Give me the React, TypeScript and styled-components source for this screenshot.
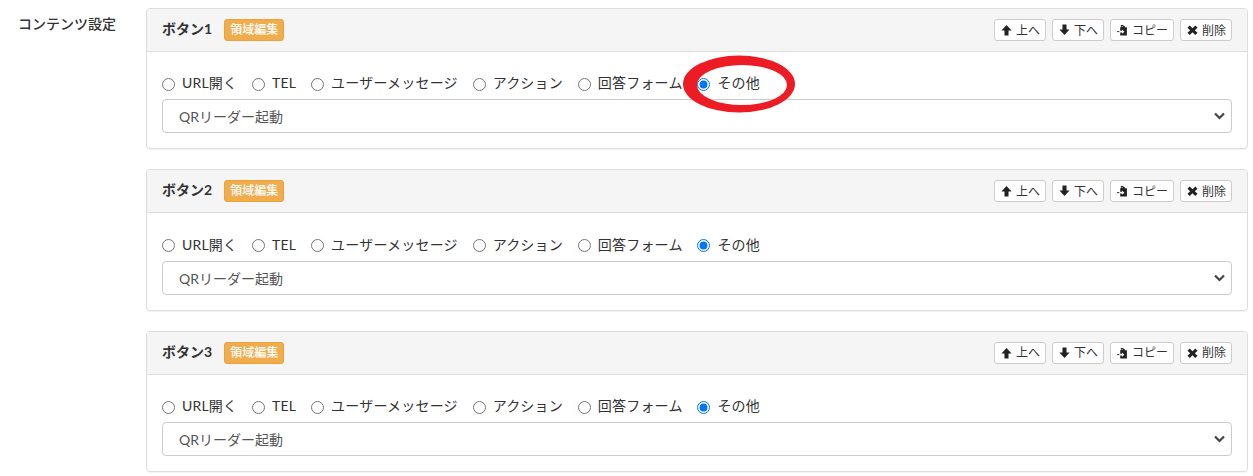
import styled, { createGlobalStyle } from "styled-components";

const GlobalStyle = createGlobalStyle`
    html, body {
        margin: 0;
        padding: 0;
        background: #fff;
        overflow: hidden;
    }
    body {
        font-family: "Lato", "Noto Sans CJK JP", sans-serif;
        font-size: 14px;
        color: #333;
    }
`

const Page = styled.div`
    display: flex;
    width: 1253px;
    height: 476px;
    box-sizing: border-box;
    padding: 8px 5px 0 18px;
    position: relative;
    overflow: hidden;
`

const SectionLabel = styled.div`
    width: 128px;
    flex-shrink: 0;
    font-size: 14px;
    font-weight: 500;
    line-height: 20px;
    padding-top: 6px;
    color: #333;
`

const CardList = styled.div`
    flex: 1;
    display: flex;
    flex-direction: column;
    gap: 20px;
`

const Card = styled.section`
    border: 1px solid #ddd;
    border-radius: 4px;
    height: 141.33px;
    box-sizing: border-box;
    box-shadow: 0 1px 1px rgba(0, 0, 0, 0.05);
`

const CardHeader = styled.div`
    display: flex;
    align-items: center;
    height: 43px;
    box-sizing: border-box;
    padding: 0 15px;
    background: #f5f5f5;
    border-bottom: 1px solid #ddd;
    border-radius: 3px 3px 0 0;
`

const CardTitle = styled.span`
    font-size: 14px;
    font-weight: 700;
    margin-right: 12px;
    padding-bottom: 4px;
`

const Badge = styled.span`
    background: #f0ad4e;
    color: #fff;
    border: 1px solid #eea236;
    border-radius: 3px;
    font-size: 12px;
    line-height: 20px;
    padding: 0 5px;
    font-weight: 500;
`

const Tools = styled.div`
    margin-left: auto;
    display: flex;
    gap: 6px;
`

const ToolButton = styled.button`
    display: inline-flex;
    align-items: center;
    gap: 4px;
    height: 22px;
    box-sizing: border-box;
    padding: 0 5px 2px 6px;
    background: #fff;
    border: 1px solid #ccc;
    border-radius: 3px;
    font-family: inherit;
    font-size: 12px;
    color: #333;

    svg {
        margin-top: 2px;
        width: 11px;
        height: 12px;
        fill: #222;
        flex-shrink: 0;
    }
`

const CardBody = styled.div`
    padding: 20.4px 15px 0;
`

const RadioRow = styled.div`
    display: flex;
    height: 22px;
    align-items: center;
    margin-bottom: 5px;
`

const RadioLabel = styled.label`
    display: inline-flex;
    align-items: center;
    margin-right: 14.85px;
    font-size: 14px;
    line-height: 20px;
    letter-spacing: 0.2px;
    white-space: nowrap;

    input {
        width: 13px;
        height: 13px;
        margin: 2px 7px 0 0;
        accent-color: #0075ff;
    }
`

const SelectBox = styled.div`
    display: flex;
    align-items: center;
    justify-content: space-between;
    height: 34px;
    box-sizing: border-box;
    padding: 0 6px 0 16px;
    border: 1px solid #ccc;
    border-radius: 4px;
    font-size: 14px;
    color: #555;
`

const Chevron = styled.svg`
    width: 11px;
    height: 8px;
    fill: none;
    stroke: #444;
    stroke-width: 2.2;
`

const Annotation = styled.svg`
    position: absolute;
    left: 680px;
    top: 52px;
`

const options = ["URL開く", "TEL", "ユーザーメッセージ", "アクション", "回答フォーム", "その他"];

const buttons = [1, 2, 3];

const UpIcon = () => (
    <svg viewBox="0 0 12 12"><path d="M6 .5 11.5 6.5H8.2V12H3.8V6.5H.5Z" /></svg>
);

const DownIcon = () => (
    <svg viewBox="0 0 12 12"><path d="M3.8 0H8.2V5.5H11.5L6 11.5.5 5.5H3.8Z" /></svg>
);

// clipboard with a small arrow coming in from the left
const CopyIcon = () => (
    <svg viewBox="0 0 12 12">
        <path d="M4.2.5H7V1.5H8.5V3H10.8V12H3.5V8.8H5.6V10.2L8 7.8 5.6 5.4V6.8H3.5V3H4.2ZM5 1.6V2.5H6.2V1.6Z" fillRule="evenodd" />
        <path d="M0 7.3H2.6V8.3H0Z" />
    </svg>
);

const RemoveIcon = () => (
    <svg viewBox="0 0 12 12"><path d="M3 1 6 4 9 1 11.5 3.5 8.5 6.2 11.5 9 9 11.5 6 8.5 3 11.5.5 9 3.5 6.2.5 3.5Z" /></svg>
);

const App = () => {
    return (
        <>
            <GlobalStyle />
            <Page>
                <SectionLabel>コンテンツ設定</SectionLabel>
                <CardList>
                    {buttons.map((n) => (
                        <Card key={n}>
                            <CardHeader>
                                <CardTitle>ボタン{n}</CardTitle>
                                <Badge>領域編集</Badge>
                                <Tools>
                                    <ToolButton><UpIcon />上へ</ToolButton>
                                    <ToolButton><DownIcon />下へ</ToolButton>
                                    <ToolButton><CopyIcon />コピー</ToolButton>
                                    <ToolButton><RemoveIcon />削除</ToolButton>
                                </Tools>
                            </CardHeader>
                            <CardBody>
                                <RadioRow>
                                    {options.map((o) => (
                                        <RadioLabel key={o}>
                                            <input type="radio" name={`type${n}`} defaultChecked={o === "その他"} />
                                            {o}
                                        </RadioLabel>
                                    ))}
                                </RadioRow>
                                <SelectBox>
                                    QRリーダー起動
                                    <Chevron viewBox="0 0 11 8"><path d="M1 1.5 5.5 6 10 1.5" /></Chevron>
                                </SelectBox>
                            </CardBody>
                        </Card>
                    ))}
                </CardList>
                <Annotation width="124" height="70" viewBox="680 52 124 70">
                    <path
                        fillRule="evenodd"
                        fill="#ed1c24"
                        d="M683 84a56 28.5 0 1 0 112 0a56 28.5 0 1 0-112 0ZM697 85a45 20 0 1 1 90 0a45 20 0 1 1-90 0Z"
                    />
                </Annotation>
            </Page>
        </>
    );
};

export default App;
